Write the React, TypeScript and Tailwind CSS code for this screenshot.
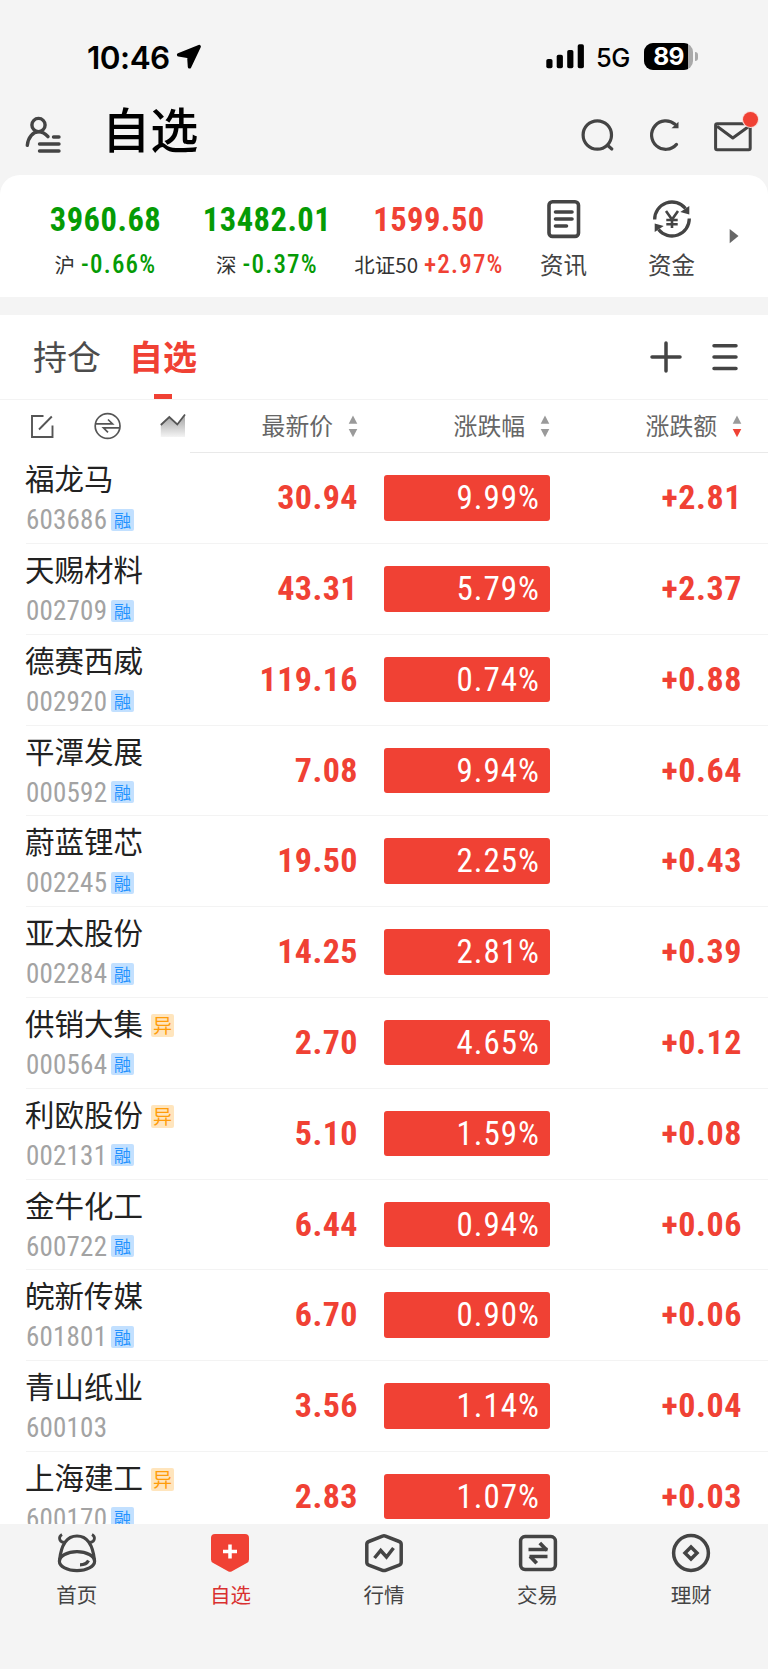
import React from "react";

const DIN = "font-['Roboto_Condensed','Roboto','Noto_Sans_CJK_SC',sans-serif]";

type Stock = { name: string; code: string; price: string; pct: string; diff: string; margin: boolean; alert: boolean };

const stocks: Stock[] = [
  { name: "福龙马", code: "603686", price: "30.94", pct: "9.99%", diff: "+2.81", margin: true, alert: false },
  { name: "天赐材料", code: "002709", price: "43.31", pct: "5.79%", diff: "+2.37", margin: true, alert: false },
  { name: "德赛西威", code: "002920", price: "119.16", pct: "0.74%", diff: "+0.88", margin: true, alert: false },
  { name: "平潭发展", code: "000592", price: "7.08", pct: "9.94%", diff: "+0.64", margin: true, alert: false },
  { name: "蔚蓝锂芯", code: "002245", price: "19.50", pct: "2.25%", diff: "+0.43", margin: true, alert: false },
  { name: "亚太股份", code: "002284", price: "14.25", pct: "2.81%", diff: "+0.39", margin: true, alert: false },
  { name: "供销大集", code: "000564", price: "2.70", pct: "4.65%", diff: "+0.12", margin: true, alert: true },
  { name: "利欧股份", code: "002131", price: "5.10", pct: "1.59%", diff: "+0.08", margin: true, alert: true },
  { name: "金牛化工", code: "600722", price: "6.44", pct: "0.94%", diff: "+0.06", margin: true, alert: false },
  { name: "皖新传媒", code: "601801", price: "6.70", pct: "0.90%", diff: "+0.06", margin: true, alert: false },
  { name: "青山纸业", code: "600103", price: "3.56", pct: "1.14%", diff: "+0.04", margin: false, alert: false },
  { name: "上海建工", code: "600170", price: "2.83", pct: "1.07%", diff: "+0.03", margin: true, alert: true },
];

function StatusBar() {
  return (
    <div className="flex h-[88px] items-start pl-[87px] pr-[70px] pt-[37px] text-black">
      <span className="font-['Inter',sans-serif] text-[31.500px] font-semibold leading-[41px] tracking-[-0.500px]">10:46</span>
      <svg className="ml-[6px] mt-[7px]" width="27" height="27" viewBox="0 0 27 27">
        <path d="M23.200 2.500 2.600 10.900 12.800 12.600 13.500 22.900Z" stroke="#000" strokeWidth="3.400" strokeLinejoin="round" fill="#000" />
      </svg>
      <svg className="ml-auto mt-[7px]" width="39" height="25" viewBox="0 0 39 25">
        <rect x="0.300" y="15" width="6.200" height="9.200" rx="1.800" />
        <rect x="10.700" y="10.800" width="6.200" height="13.400" rx="1.800" />
        <rect x="21.200" y="6" width="6.200" height="18.200" rx="1.800" />
        <rect x="31.700" y="0.300" width="6.200" height="23.900" rx="1.800" />
      </svg>
      <span className="ml-[11px] mt-[2px] whitespace-nowrap font-['Inter',sans-serif] text-[25.500px] font-medium leading-[38px] tracking-[-0.400px]">5G</span>
      <div className="ml-[14px] mt-[6px] flex items-center">
        <div className="flex h-[27px] w-[49px] overflow-hidden rounded-[9px] bg-[#a9a9a9]">
          <div className="h-[27px] w-[44px] bg-black pl-[5px] text-center font-['Inter',sans-serif] text-[24.500px] font-bold leading-[27px] tracking-[-0.600px] text-white">89</div>
        </div>
        <div className="ml-[2px] h-[9px] w-[3px] rounded-r-full bg-[#a9a9a9]" />
      </div>
    </div>
  );
}

function TitleBar() {
  return (
    <div className="flex h-[87px] items-start pl-[25px] text-[#444]">
      <svg className="mt-[28px]" width="38" height="38" viewBox="0 0 38 38" fill="none" stroke="#444" strokeWidth="3.400" strokeLinecap="round">
        <circle cx="13.500" cy="9" r="6.600" />
        <path d="M2.300 29.300C3 21.500 8 15.700 13.500 15.700c3.800 0 7 2 9.500 5M28.500 21h5.500M14.500 28h19.500M14.500 35h19.500" />
      </svg>
      <h1 className="ml-[39px] mt-[6px] font-['Noto_Sans_CJK_SC',sans-serif] text-[48.200px] font-medium leading-[66px] text-black">自选</h1>
      <svg className="ml-auto mt-[30px]" width="34" height="34" viewBox="0 0 34 34" fill="none" stroke="#444" strokeWidth="3.200" strokeLinecap="round">
        <circle cx="16.300" cy="17" r="14.200" />
        <path d="m26.500 27.300 4.300 3.700" />
      </svg>
      <svg className="ml-[34px] mt-[30px]" width="34" height="34" viewBox="0 0 34 34">
        <path d="M27.500 26.400A14.200 14.200 0 1 1 26 6.300" fill="none" stroke="#444" strokeWidth="3.200" strokeLinecap="round" />
        <path d="M29.500 3.800v6.400h-7Z" fill="#444" />
      </svg>
      <div className="relative ml-[31px] mr-[16px] mt-[34px]">
        <svg width="38" height="30" viewBox="0 0 38 30" fill="none" stroke="#444" strokeWidth="3" strokeLinejoin="round">
          <rect x="1.600" y="1.800" width="34.600" height="26" rx="1.500" />
          <path d="M3 4.300 18.800 16 35 4.300" />
        </svg>
        <span className="absolute left-[29px] top-[-10px] h-[15px] w-[15px] rounded-full bg-[#f04134] ring-1 ring-[#f9d9d6]" />
      </div>
    </div>
  );
}

function IndexItem({ value, label, pct, tone, width }: { value: string; label: string; pct: string; tone: string; width: string }) {
  return (
    <div className={`${width} flex shrink-0 flex-col items-center ${DIN}`}>
      <span className={`${tone} text-[32.500px] font-bold leading-[38px] tracking-[0.500px]`}>{value}</span>
      <span className="mt-[11px] flex items-baseline whitespace-nowrap leading-[28px]">
        <span className="font-['Noto_Sans_CJK_SC',sans-serif] text-[20.500px] text-[#333]">{label}</span>
        <span className={`${tone} ml-[6px] text-[25px] font-medium tracking-[1.200px]`}>{pct}</span>
      </span>
    </div>
  );
}

function IndexPanel() {
  return (
    <div className="flex h-[122px] rounded-t-[20px] bg-white pl-[25px] pt-[26px]">
      <IndexItem value="3960.68" label="沪" pct="-0.66%" tone="text-[#059b05]" width="w-[161px]" />
      <IndexItem value="13482.01" label="深" pct="-0.37%" tone="text-[#059b05]" width="w-[162px]" />
      <IndexItem value="1599.50" label="北证50" pct="+2.97%" tone="text-[#f04134]" width="w-[162px]" />
      <div className="flex w-[107px] flex-col items-center font-['Noto_Sans_CJK_SC',sans-serif] text-[23.500px] leading-[32px] text-[#444]">
        <svg className="mt-[-2px]" width="36" height="40" viewBox="0 0 36 40" fill="none" stroke="#444" strokeWidth="3.600" strokeLinecap="round">
          <rect x="3" y="2.800" width="29.500" height="34.600" rx="3.500" />
          <path d="M9.500 13H26M9.500 20H26M9.500 27H20.500" />
        </svg>
        <span className="mt-[9px]">资讯</span>
      </div>
      <div className="flex w-[109px] flex-col items-center font-['Noto_Sans_CJK_SC',sans-serif] text-[23.500px] leading-[32px] text-[#444]">
        <svg className="mt-[-2px]" width="40" height="40" viewBox="0 0 40 40" fill="none" stroke="#444" strokeWidth="3.300">
          <path d="M2.700 20.500A17.300 17.300 0 0 1 33.500 9.500M37.300 19.500A17.300 17.300 0 0 1 6.500 30.500" />
          <path d="M37.300 7v8.500l-9-2.500ZM2.700 33v-8.500l9 2.500Z" fill="#444" stroke="none" />
          <path d="m14 12 6 8.500 6-8.500M20 20.500V29M14.300 21h11.400M14.300 25.200h11.400" strokeWidth="2.600" />
        </svg>
        <span className="mt-[9px]">资金</span>
      </div>
      <svg className="mt-[27px]" width="14" height="16" viewBox="0 0 14 16">
        <path d="M3.700 1v14.200l8.800-7.100Z" fill="#666" />
      </svg>
    </div>
  );
}

function Tabs() {
  return (
    <div className="mt-[18px] flex h-[85px] items-start border-b border-[#f3f3f3] bg-white pl-[33px] font-['Noto_Sans_CJK_SC',sans-serif]">
      <span className="pt-[17px] text-[34px] leading-[48px] text-[#4c4c4c]">持仓</span>
      <div className="ml-[28px] flex h-[84px] flex-col items-center pt-[17px]">
        <span className="text-[34px] font-bold leading-[48px] text-[#f04134]">自选</span>
        <span className="mt-auto h-[5px] w-[18px] bg-[#f04134]" />
      </div>
      <svg className="ml-auto mt-[26px]" width="32" height="32" viewBox="0 0 32 32" stroke="#444" strokeWidth="3.500" strokeLinecap="round">
        <path d="M16 2v28M2 16h28" />
      </svg>
      <svg className="ml-[29px] mr-[29px] mt-[27px]" width="28" height="30" viewBox="0 0 28 30" stroke="#444" strokeWidth="3.500" strokeLinecap="round">
        <path d="M3 3.800h22M3 15h22M3 26.500h22" />
      </svg>
    </div>
  );
}

function SortHead({ label, active }: { label: string; active?: boolean }) {
  return (
    <div className="flex w-[192px] items-center justify-end">
      <span className="mt-[-2px] font-['Noto_Sans_CJK_SC',sans-serif] text-[23.800px] leading-[34px] text-[#666]">{label}</span>
      <svg className="ml-[15px]" width="10" height="24" viewBox="0 0 10 24">
        <path d="M5 1.500 9.300 9.800H.7Z" fill="#9a9a9a" />
        <path d="M5 23.300 9.300 15H.7Z" fill={active ? "#f04134" : "#9a9a9a"} />
      </svg>
    </div>
  );
}

function TableHead() {
  return (
    <div className="flex h-[53.400px] bg-white">
      <div className="flex w-[190px] shrink-0 items-center pb-px pl-[30px]">
        <svg width="25" height="25" viewBox="0 0 25 25" fill="none" stroke="#555" strokeWidth="1.900">
          <path d="M13.500 2H2v21h20.500V11.500" />
          <path d="M9 15.500 21.800 2.500" />
        </svg>
        <svg className="ml-[39px]" width="28" height="28" viewBox="0 0 28 28" fill="none" stroke="#555" strokeWidth="1.700">
          <circle cx="13.600" cy="14" r="12.400" />
          <path d="M1.500 11.800H18.500L14 7.500M25.700 15.900H9.500L14 20.300" />
        </svg>
        <svg className="ml-[38px]" width="26" height="26" viewBox="0 0 26 26">
          <defs>
            <linearGradient id="area" x1="0" y1="0" x2="0" y2="1">
              <stop offset="0.200" stopColor="#b0b0b0" />
              <stop offset="1" stopColor="#f4f4f4" />
            </linearGradient>
          </defs>
          <path d="M.8 12 9.300 4l8 7.500L25 1.500V24H.8Z" fill="url(#area)" />
          <path d="M.8 12 9.300 4l8 7.500L25 1.500" fill="none" stroke="#555" strokeWidth="1.800" />
        </svg>
      </div>
      <div className="flex flex-1 border-b border-[#e9e9e9] pr-[26px]">
        <div className="flex flex-1 items-center justify-between">
          <div className="w-[168px] shrink-0 [&>div]:w-full">
            <SortHead label="最新价" />
          </div>
          <SortHead label="涨跌幅" />
          <SortHead label="涨跌额" active />
        </div>
      </div>
    </div>
  );
}

function StockRow({ s }: { s: Stock }) {
  return (
    <div className="ml-[26px] flex h-[90.770px] shrink-0 border-b border-[#f3f3f3]">
      <div className="w-[190px] shrink-0 pt-[4px]">
        <div className="flex h-[41px] items-center">
          <span className="ml-[-1px] whitespace-nowrap font-['Noto_Sans_CJK_SC',sans-serif] text-[29.500px] leading-[41px] text-[#222]">{s.name}</span>
          {s.alert && (
            <span className="ml-[8px] mt-[6px] h-[23px] w-[23px] rounded-[2px] bg-[#ffe5bd] text-center font-['Noto_Sans_CJK_SC',sans-serif] text-[19px] leading-[21px] text-[#ff9c0a]">异</span>
          )}
        </div>
        <div className="mt-[4px] flex h-[36px] items-center">
          <span className={`${DIN} w-[85px] text-[27px] font-normal leading-[36px] tracking-[0.200px] text-[#a3a3a3]`}>{s.code}</span>
          {s.margin && (
            <span className="mt-[-1px] h-[22px] w-[23px] rounded-[2px] bg-[#c2e0ff] text-center font-['Noto_Sans_CJK_SC',sans-serif] text-[17px] leading-[21px] text-[#2492ff]">融</span>
          )}
        </div>
      </div>
      <span className={`${DIN} w-[142px] text-right text-[34px] font-bold leading-[88px] tracking-[0.450px] text-[#f04134]`}>{s.price}</span>
      <span className={`${DIN} ml-[26px] mt-[22px] h-[45.500px] w-[166px] rounded-[3px] bg-[#f04134] pr-[10px] text-right text-[33px] font-[450] leading-[45px] tracking-[1px] text-white`}>{s.pct}</span>
      <span className={`${DIN} flex-1 pr-[26px] text-right text-[34px] font-bold leading-[88px] tracking-[0.600px] text-[#f04134]`}>{s.diff}</span>
    </div>
  );
}

const strokeProps = { fill: "none", stroke: "#444", strokeWidth: 3.5, strokeLinejoin: "round" as const };

const navItems = [
  {
    label: "首页",
    icon: (
      <g {...strokeProps} strokeWidth="3.200">
        <ellipse cx="20" cy="28.200" rx="17.600" ry="9.500" />
        <path d="M2.500 27.500C3.500 18 6.500 3 20 3s16.500 15 17.500 24.500" />
        <path d="M5 1.500C1.500 3.500 1.500 8.500 6.800 9.500M35 1.500C38.500 3.500 38.500 8.500 33.200 9.500" strokeWidth="2.800" />
        <path d="M23 31.800c4.200 0 7-1.300 8.500-4.300" />
      </g>
    ),
  },
  {
    label: "自选",
    active: true,
    icon: (
      <g>
        <path d="M5 1h30a4 4 0 0 1 4 4v21.500a4 4 0 0 1-2.200 3.600L21.500 38.400a3 3 0 0 1-3 0L3.200 30.100A4 4 0 0 1 1 26.500V5a4 4 0 0 1 4-4Z" fill="#f04134" />
        <path d="M20 11.500v14M13 18.500h14" stroke="#fff" strokeWidth="3.500" />
      </g>
    ),
  },
  {
    label: "行情",
    icon: (
      <g {...strokeProps}>
        <path d="M18.500 3.100a4 4 0 0 1 3 0L35.200 8.500a3 3 0 0 1 2 2.800v18a3 3 0 0 1-2 2.800L21.500 37.300a4 4 0 0 1-3 0L4.800 32.100a3 3 0 0 1-2-2.800v-18a3 3 0 0 1 2-2.800Z" />
        <path d="m10.500 25 6.200-7.500 5.800 6.500 7-9" strokeLinejoin="miter" />
      </g>
    ),
  },
  {
    label: "交易",
    icon: (
      <g {...strokeProps}>
        <rect x="2.600" y="3.600" width="34.800" height="33" rx="4.500" />
        <path d="M10.500 16.600H29.500M29.500 23.600H11.500" strokeLinejoin="miter" />
        <path d="M21.800 10 28.800 17.200M12 23.200 18.700 30.200" strokeWidth="3.800" strokeLinejoin="miter" />
      </g>
    ),
  },
  {
    label: "理财",
    icon: (
      <g {...strokeProps}>
        <circle cx="20" cy="20" r="17.400" />
        <path d="m20 14 6 6-6 6-6-6Z" strokeLinejoin="miter" />
      </g>
    ),
  },
];

function BottomNav() {
  return (
    <nav className="flex h-[145px] bg-[#f4f4f4] pt-[9px]">
      {navItems.map((n) => (
        <div key={n.label} className="flex flex-1 flex-col items-center">
          <svg width="40" height="40" viewBox="0 0 40 40">{n.icon}</svg>
          <span className={`mt-[7px] font-['Noto_Sans_CJK_SC',sans-serif] text-[20.500px] leading-[28px] ${n.active ? "text-[#d9302f]" : "text-[#444]"}`}>{n.label}</span>
        </div>
      ))}
    </nav>
  );
}

export default function App() {
  return (
    <div className="flex h-[1669px] w-[768px] flex-col overflow-hidden bg-[#f4f4f4]">
      <StatusBar />
      <TitleBar />
      <IndexPanel />
      <Tabs />
      <TableHead />
      <div className="min-h-0 flex-1 overflow-hidden bg-white">
        {stocks.map((s) => (
          <StockRow key={s.code} s={s} />
        ))}
      </div>
      <BottomNav />
    </div>
  );
}
